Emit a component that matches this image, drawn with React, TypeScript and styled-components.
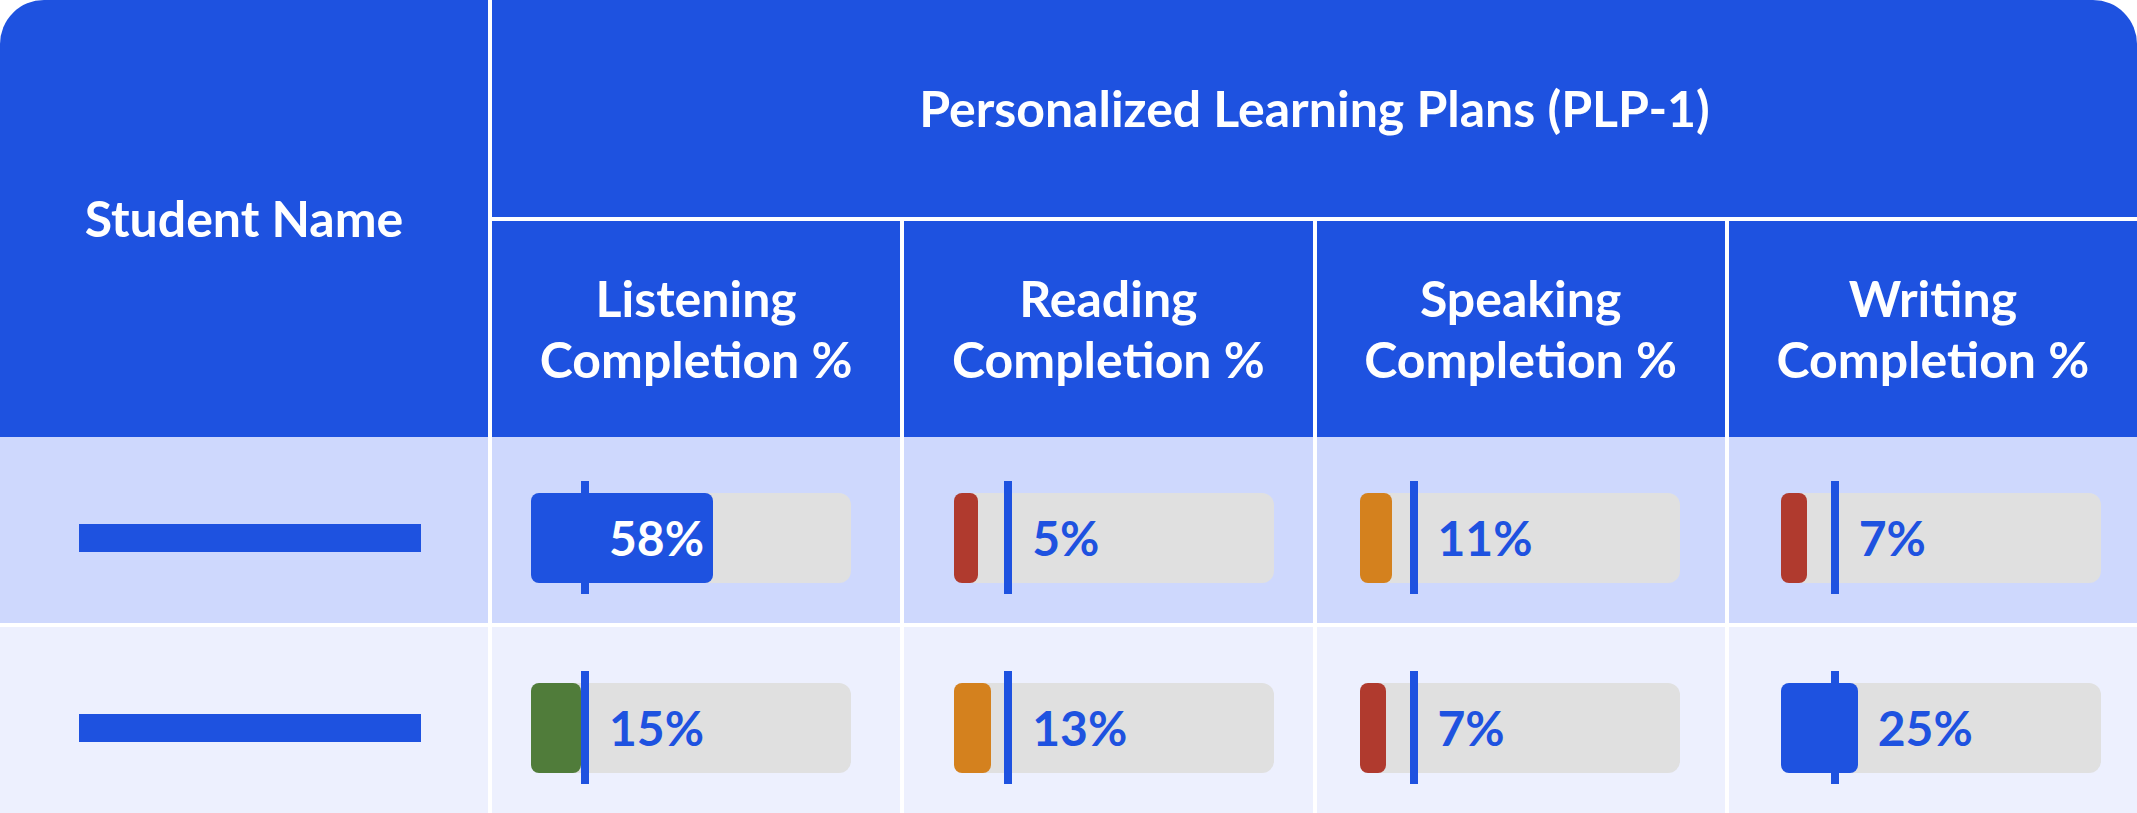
import React from "react";
import styled, { createGlobalStyle } from "styled-components";

const BLUE = "#1e52e0";

const GlobalStyle = createGlobalStyle`
  html, body {
    margin: 0;
    padding: 0;
    background: #ffffff;
  }
  body {
    font-family: Lato, "Open Sans", sans-serif;
  }
`;

const Table = styled.div`
  display: grid;
  grid-template-columns: 488px repeat(4, 1fr);
  grid-template-rows: 217px 220px 186px 190px;
  column-gap: 4px;
  width: 2137px;
  background: #ffffff;
  border-radius: 44px 44px 0 0;
  overflow: hidden;
`;

const HeadCell = styled.div<{ $span?: number; $rows?: number; $top?: boolean }>`
  grid-column: span ${(p) => p.$span ?? 1};
  grid-row: span ${(p) => p.$rows ?? 1};
  background: ${BLUE};
  border-top: ${(p) => (p.$top ? "4px solid #ffffff" : "none")};
  display: flex;
  align-items: center;
  justify-content: center;
  text-align: center;
  color: #ffffff;
  font-weight: 700;
  font-size: 50px;
  line-height: 61px;
`;

const BodyCell = styled.div<{ $shade: string; $divider?: boolean; $inset?: number }>`
  background: ${(p) => p.$shade};
  border-top: ${(p) => (p.$divider ? "4px solid #ffffff" : "none")};
  display: flex;
  align-items: center;
  padding: 15px 0 0 ${(p) => p.$inset ?? 0}px;
`;

const NameBar = styled.div`
  width: 342px;
  height: 28px;
  background: ${BLUE};
`;

const Track = styled.div`
  position: relative;
  width: 320px;
  height: 90px;
  background: #e0e0e0;
  border-radius: 12px;
`;

const Fill = styled.div<{ $color: string }>`
  position: absolute;
  left: 0;
  top: 0;
  bottom: 0;
  background: ${(p) => p.$color};
  border-radius: 8px;
`;

const Marker = styled.div`
  position: absolute;
  left: 50px;
  top: -12px;
  bottom: -11px;
  width: 8px;
  background: ${BLUE};
`;

const Label = styled.span<{ $light: boolean }>`
  position: absolute;
  top: 50%;
  transform: translateY(-50%);
  color: ${(p) => (p.$light ? "#ffffff" : BLUE)};
  font-weight: 700;
  font-size: 48px;
  line-height: 1;
  white-space: nowrap;
`;

const COLORS = {
  blue: BLUE,
  red: "#b03a2e",
  orange: "#d4811e",
  green: "#507c3a",
};

type Score = { pct: number; fill: number; color: keyof typeof COLORS };

const skills = ["Listening", "Reading", "Speaking", "Writing"];
const insets = [39, 50, 43, 52];

const rows: { shade: string; scores: Score[] }[] = [
  {
    shade: "#ced8fd",
    scores: [
      { pct: 58, fill: 182, color: "blue" },
      { pct: 5, fill: 24, color: "red" },
      { pct: 11, fill: 32, color: "orange" },
      { pct: 7, fill: 26, color: "red" },
    ],
  },
  {
    shade: "#edf0fe",
    scores: [
      { pct: 15, fill: 50, color: "green" },
      { pct: 13, fill: 37, color: "orange" },
      { pct: 7, fill: 26, color: "red" },
      { pct: 25, fill: 77, color: "blue" },
    ],
  },
];

const Progress = ({ score }: { score: Score }) => {
  const inside = score.fill > 150;
  const left = inside ? 78 : Math.max(78, score.fill + 20);
  return (
    <Track>
      <Fill $color={COLORS[score.color]} style={{ width: score.fill }} />
      <Marker />
      <Label $light={inside} style={{ left }}>
        {score.pct}%
      </Label>
    </Track>
  );
};

export default function App() {
  return (
    <>
      <GlobalStyle />
      <Table>
        <HeadCell $rows={2}>Student Name</HeadCell>
        <HeadCell $span={4}>Personalized Learning Plans (PLP-1)</HeadCell>
        {skills.map((s) => (
          <HeadCell key={s} $top>
            {s}
            <br />
            Completion %
          </HeadCell>
        ))}
        {rows.map((row, r) => (
          <React.Fragment key={r}>
            <BodyCell $shade={row.shade} $divider={r > 0} $inset={79}>
              <NameBar />
            </BodyCell>
            {row.scores.map((score, i) => (
              <BodyCell key={i} $shade={row.shade} $divider={r > 0} $inset={insets[i]}>
                <Progress score={score} />
              </BodyCell>
            ))}
          </React.Fragment>
        ))}
      </Table>
    </>
  );
}
